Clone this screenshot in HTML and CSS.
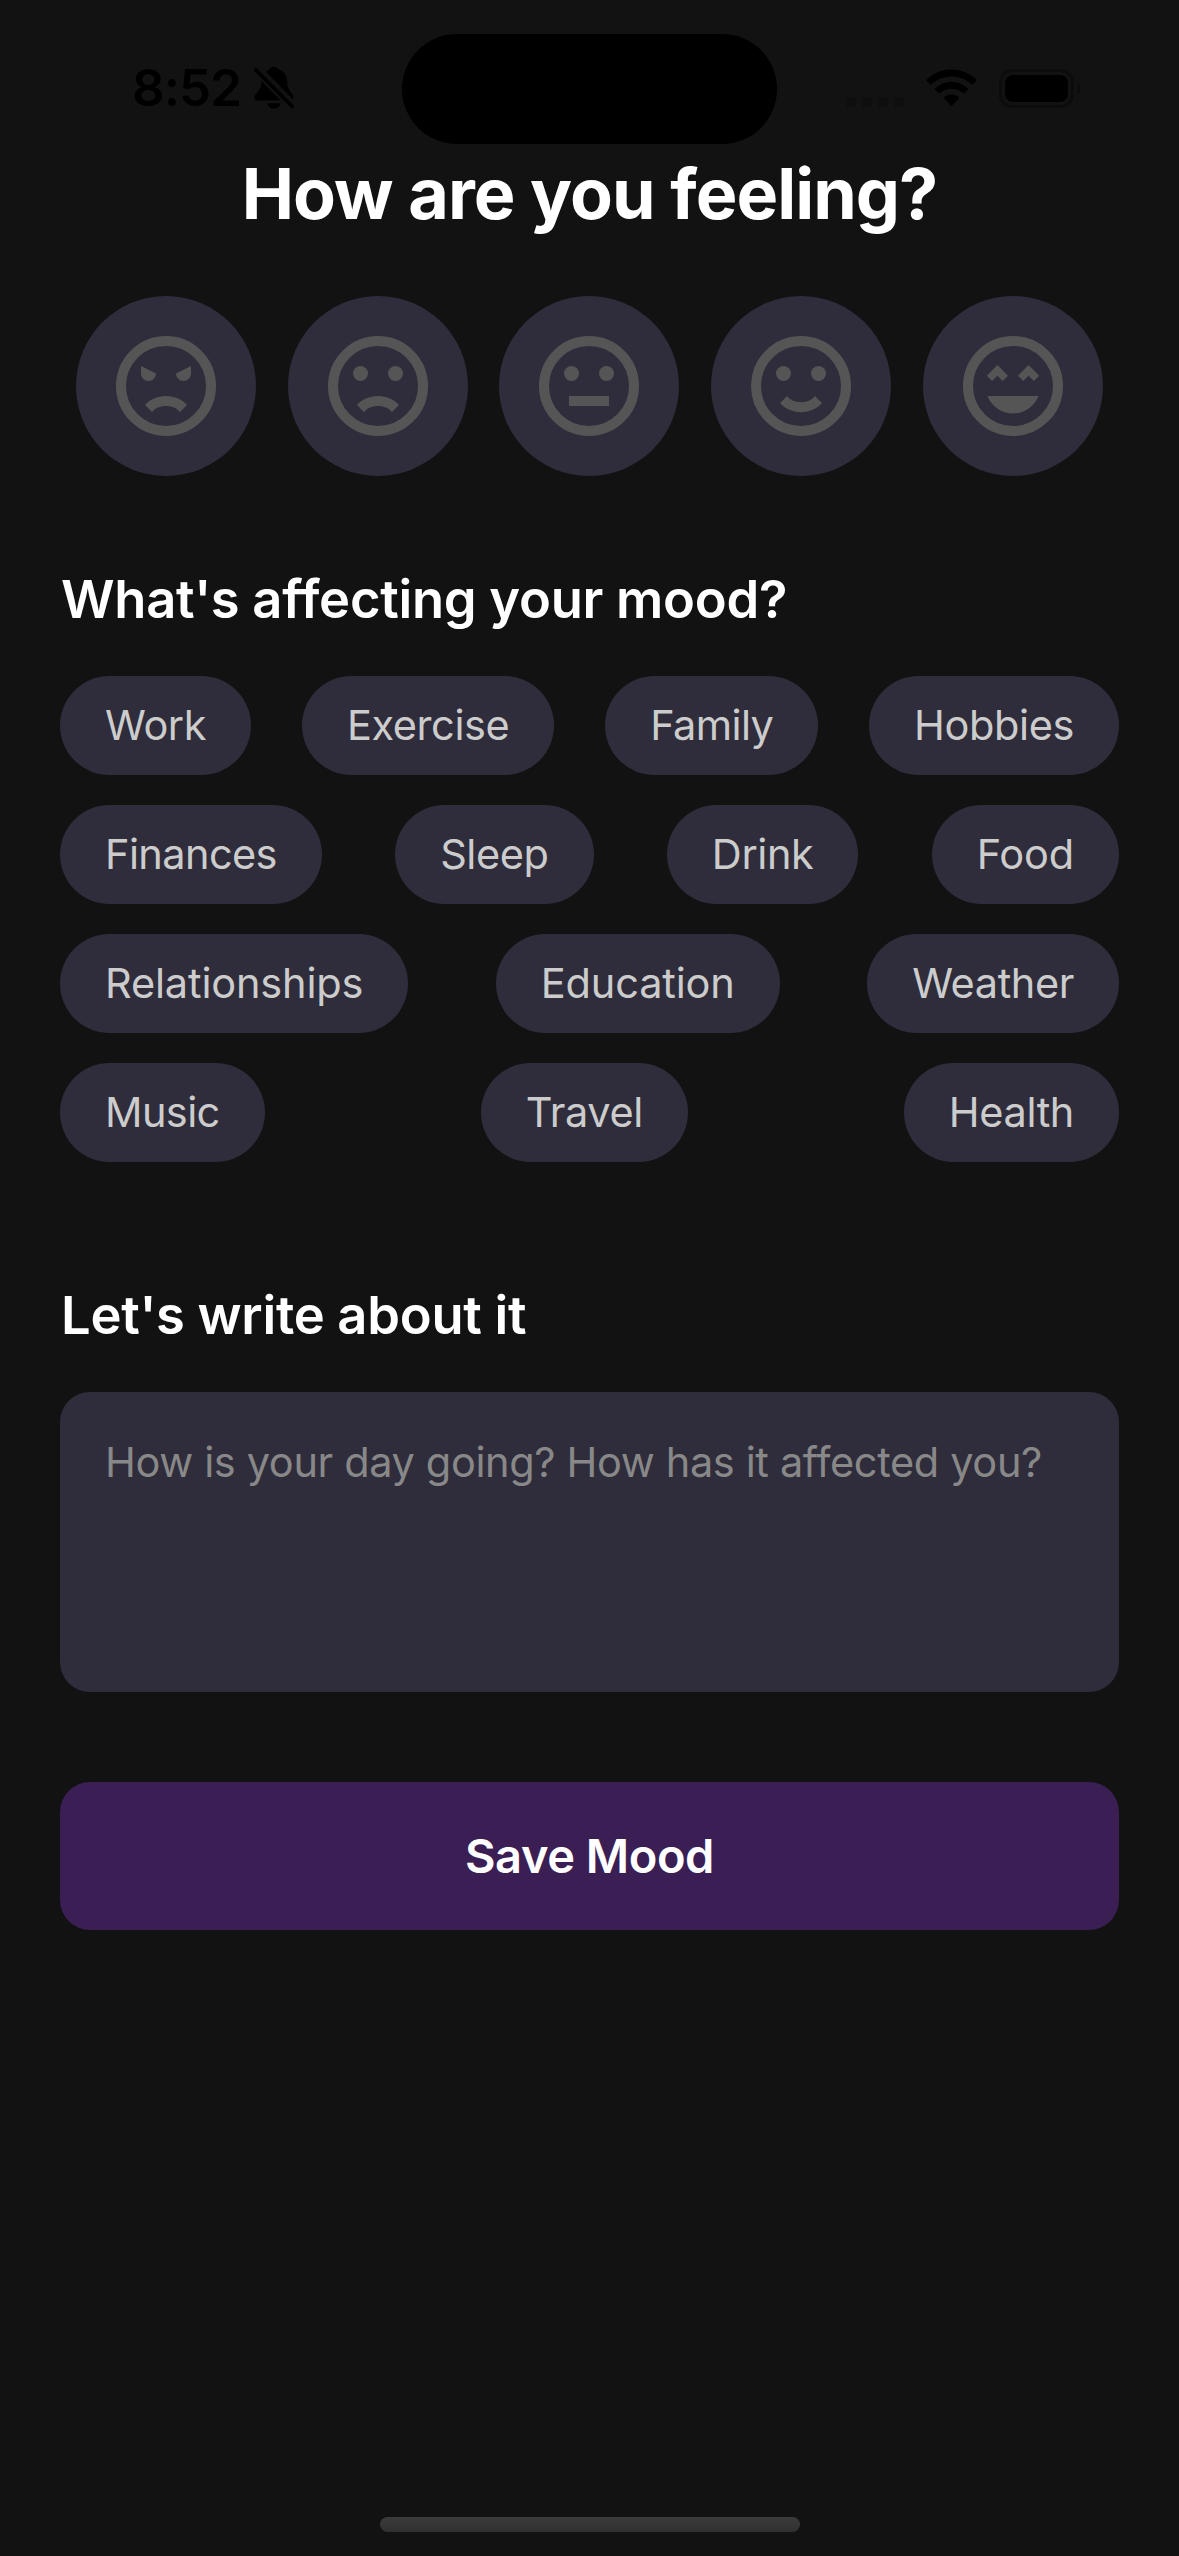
FILE: index.html
```html
<!DOCTYPE html>
<html lang="en">
<head>
<meta charset="utf-8">
<title>How are you feeling?</title>
<link rel="stylesheet" href="styles.css">
</head>
<body>
<div class="screen">
  <header class="status">
    <div class="status-left">
      <span class="time">8:52</span>
      <svg class="bell" viewBox="0 0 40 44">
        <path d="M12 6C14 4.500 15 4 16 2.800C17.500 .3 22.500 .3 24.300 3.300C31 5.500 33 10 33.300 17C33.500 23 36 25 38.500 28.500C39.500 30 39.500 31.500 39 33.500ZM7.500 15L27 34.500H3.500C.5 34.500-.5 31 1.500 28.500C4.500 25 6.800 23 7 19ZM13.500 37.300H26.500C25.500 44.500 14.500 44.500 13.500 37.300Z"/>
        <path class="slash-gap" d="M2 4.200L38 40.200"/>
        <path class="slash" d="M2 4.200L38 40.200"/>
      </svg>
    </div>
    <div class="island"></div>
    <div class="status-right">
      <div class="dots"><i></i><i></i><i></i><i></i></div>
      <svg class="wifi" viewBox="0 0 51 38">
        <path d="M.8 10.500C14.500-2.800 36.500-2.800 50.200 10.500Q50.800 11.200 50.200 11.900L46.200 15.800C34.500 4.800 16.500 4.800 4.800 15.800L.8 11.900Q.2 11.200 .8 10.500ZM9.200 19.300C18.500 10.700 32.500 10.700 41.800 19.300Q42.400 20 41.800 20.700L37.700 24.600C30.500 18.200 20.500 18.200 13.300 24.600L9.200 20.700Q8.600 20 9.200 19.300ZM18.200 28.300C22.300 24.700 28.700 24.700 32.800 28.300Q33.400 29 32.800 29.600L26.200 36.500Q25.500 37.200 24.800 36.500L18.200 29.600Q17.600 29 18.200 28.300Z"/>
      </svg>
      <svg class="battery" viewBox="0 0 82 39">
        <rect class="shell" x="1.500" y="1.500" width="72" height="36" rx="11.500"/>
        <rect x="6" y="6" width="63" height="27" rx="8"/>
        <path class="tip" d="M78 13.500C83 15.500 83 23.500 78 25.500Z"/>
      </svg>
    </div>
  </header>

  <main class="content">
    <h1 class="title">How are you feeling?</h1>

    <div class="moods">
      <button class="mood" aria-label="Angry"><svg viewBox="0 0 24 24"><circle class="ring" cx="12" cy="12" r="9"/><path d="M7 8L10 9.500C10 10.300 9.300 11 8.500 11S7 10.300 7 9.500ZM17 8L14 9.500C14 10.300 14.700 11 15.500 11S17 10.300 17 9.500ZM12 14C13.750 14 15.290 14.720 16.190 15.810L14.770 17.230C14.320 16.500 13.250 16 12 16S9.680 16.500 9.230 17.230L7.810 15.810C8.710 14.720 10.250 14 12 14Z"/></svg></button>
      <button class="mood" aria-label="Sad"><svg viewBox="0 0 24 24"><circle class="ring" cx="12" cy="12" r="9"/><circle cx="8.500" cy="9.500" r="1.500"/><circle cx="15.500" cy="9.500" r="1.500"/><path d="M12 14C13.750 14 15.290 14.720 16.190 15.810L14.770 17.230C14.320 16.500 13.250 16 12 16S9.680 16.500 9.230 17.230L7.810 15.810C8.710 14.720 10.250 14 12 14Z"/></svg></button>
      <button class="mood" aria-label="Neutral"><svg viewBox="0 0 24 24"><circle class="ring" cx="12" cy="12" r="9"/><circle cx="8.500" cy="9.500" r="1.500"/><circle cx="15.500" cy="9.500" r="1.500"/><path d="M8 14H16V16H8Z"/></svg></button>
      <button class="mood" aria-label="Happy"><svg viewBox="0 0 24 24"><circle class="ring" cx="12" cy="12" r="9"/><circle cx="8.500" cy="9.500" r="1.500"/><circle cx="15.500" cy="9.500" r="1.500"/><path d="M12 17.230C10.250 17.230 8.710 16.500 7.810 15.420L9.230 14C9.680 14.720 10.750 15.230 12 15.230S14.320 14.720 14.770 14L16.190 15.420C15.290 16.500 13.750 17.230 12 17.230Z"/></svg></button>
      <button class="mood" aria-label="Excited"><svg viewBox="0 0 24 24"><circle class="ring" cx="12" cy="12" r="9"/><path d="M8.880 7.820L11 9.940L9.940 11L8.880 9.940L7.820 11L6.760 9.940ZM15.120 7.820L17.240 9.940L16.180 11L15.120 9.940L14.060 11L13 9.940ZM6.890 14H17.110C16.310 16.040 14.330 17.500 12 17.500S7.690 16.040 6.890 14Z"/></svg></button>
    </div>

    <h2 class="heading factors-heading">What's affecting your mood?</h2>
    <div class="chips">
      <button class="chip">Work</button>
      <button class="chip">Exercise</button>
      <button class="chip tight">Family</button>
      <button class="chip">Hobbies</button>
      <button class="chip tight">Finances</button>
      <button class="chip">Sleep</button>
      <button class="chip">Drink</button>
      <button class="chip loose">Food</button>
      <button class="chip loose">Relationships</button>
      <button class="chip loose">Education</button>
      <button class="chip">Weather</button>
      <button class="chip tight">Music</button>
      <button class="chip">Travel</button>
      <button class="chip">Health</button>
    </div>

    <h2 class="heading journal-heading">Let's write about it</h2>
    <div class="journal">How is your day going? How has it affected you?</div>

    <button class="save">Save Mood</button>
  </main>

  <div class="home-indicator"></div>
</div>
</body>
</html>
```
FILE: styles.css
```css
* {
  box-sizing: border-box;
}

body {
  margin: 0;
  background: #121212;
  font-family: Inter, "Liberation Sans", sans-serif;
}

button {
  margin: 0;
  padding: 0;
  border: 0;
  font: inherit;
}

.screen {
  display: flex;
  flex-direction: column;
  width: 1179px;
  height: 2556px;
  overflow: hidden;
}

/* Status bar */
.status {
  display: grid;
  grid-template-columns: 402px 375px 402px;
  height: 144px;
  padding-top: 34px;
}

.status-left,
.status-right {
  display: flex;
  align-items: center;
  height: 108px;
}

.status-left {
  padding-left: 132px;
}

.time {
  width: 122px;
  font-size: 51px;
  font-weight: 600;
  line-height: 60px;
  letter-spacing: -0.9px;
  white-space: nowrap;
}

.bell {
  width: 40px;
  height: 44px;
}

.slash,
.slash-gap {
  fill: none;
  stroke: #000;
  stroke-width: 3.6;
  stroke-linecap: round;
}

.slash-gap {
  stroke: #121212;
  stroke-width: 7;
}

.island {
  height: 110px;
  border-radius: 55px;
  background: #000;
}

.status-right {
  padding-left: 69px;
}

.dots {
  display: flex;
  gap: 6px;
  margin-top: 27px;
}

.dots i {
  width: 10px;
  height: 10px;
  border-radius: 3px;
  background: #0e0e0e;
}

.wifi {
  width: 51px;
  height: 38px;
  margin-left: 22px;
}

.battery {
  width: 82px;
  height: 39px;
  margin-left: 22px;
}

.shell {
  fill: none;
  stroke: #0c0c0c;
  stroke-width: 3;
}

.tip {
  fill: #0c0c0c;
}

/* Page content */
.content {
  display: flex;
  flex-direction: column;
  padding: 0 60px;
}

.title {
  margin: 7px 0 0;
  color: #fff;
  font-size: 70px;
  font-weight: 700;
  line-height: 86px;
  letter-spacing: -0.95px;
  text-align: center;
}

.moods {
  display: flex;
  justify-content: space-around;
  margin-top: 59px;
}

.mood {
  display: grid;
  place-items: center;
  width: 180px;
  height: 180px;
  border-radius: 50%;
  background: #2f2d3b;
}

.mood svg {
  width: 120px;
  height: 120px;
  fill: #555;
}

.mood .ring {
  fill: none;
  stroke: #555;
  stroke-width: 2;
}

.heading {
  margin: 0;
  padding-left: 1px;
  color: #fff;
  font-size: 52.500px;
  font-weight: 600;
  line-height: 64px;
  letter-spacing: -0.27px;
  white-space: nowrap;
}

.factors-heading {
  margin-top: 91px;
}

.chips {
  display: flex;
  flex-wrap: wrap;
  justify-content: space-between;
  row-gap: 30px;
  margin-top: 45px;
}

.chip {
  height: 99px;
  padding: 0 45px 1px;
  border-radius: 49.500px;
  background: #2f2d3b;
  color: #ccc;
  font-size: 41.500px;
  line-height: 50px;
  letter-spacing: -0.4px;
}

.tight {
  letter-spacing: -0.6px;
}

.loose {
  letter-spacing: -0.17px;
}

.journal-heading {
  margin-top: 121px;
}

.journal {
  height: 300px;
  margin-top: 45px;
  padding: 45px;
  border-radius: 30px;
  background: #2f2d3b;
  color: #888;
  font-size: 41.500px;
  line-height: 50px;
  letter-spacing: -0.36px;
  white-space: nowrap;
}

.save {
  height: 148px;
  margin-top: 90px;
  padding-bottom: 1px;
  border-radius: 30px;
  background: #3b1e54;
  color: #fff;
  font-size: 47px;
  font-weight: 600;
  line-height: 57px;
  letter-spacing: -0.45px;
}

.home-indicator {
  width: 420px;
  height: 15px;
  margin: auto auto 24px;
  border-radius: 7.500px;
  background: linear-gradient(#3b3b3b, #303030);
}
```
